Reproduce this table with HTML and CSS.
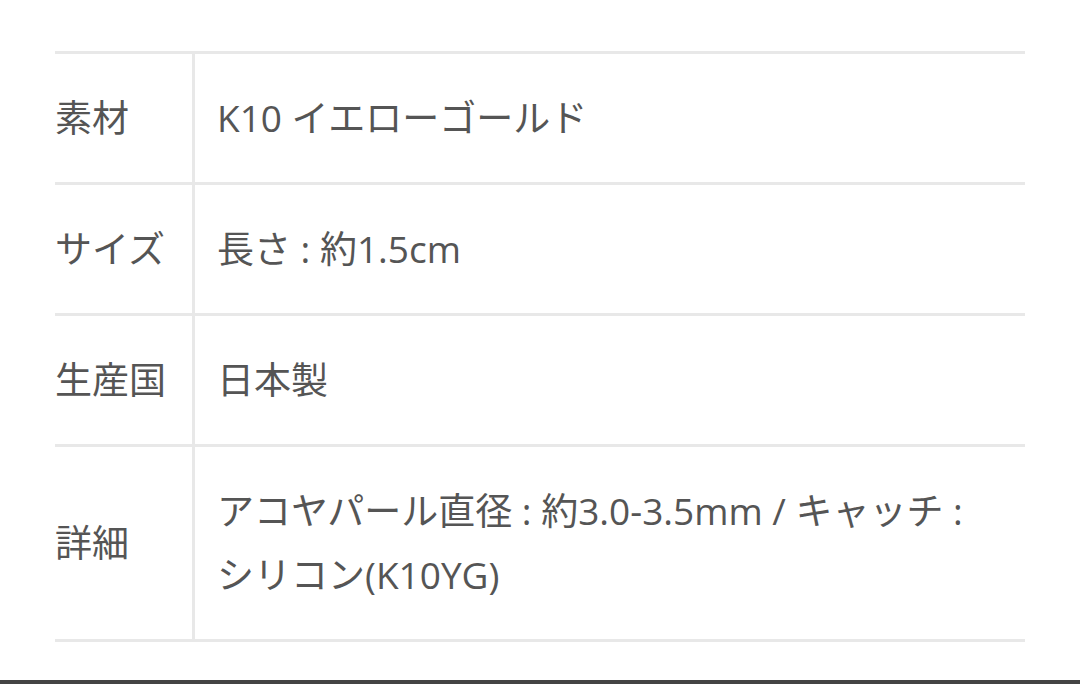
FILE: index.html
```html
<!DOCTYPE html>
<html lang="ja">
<head>
<meta charset="utf-8">
<link rel="stylesheet" href="styles.css">
</head>
<body>
<div class="page">
  <table class="spec">
    <tr>
      <th>素材</th>
      <td>K10 イエローゴールド</td>
    </tr>
    <tr>
      <th>サイズ</th>
      <td>長さ : 約1.5cm</td>
    </tr>
    <tr>
      <th>生産国</th>
      <td>日本製</td>
    </tr>
    <tr>
      <th>詳細</th>
      <td>アコヤパール直径 : 約3.0-3.5mm / キャッチ : シリコン(K10YG)</td>
    </tr>
  </table>
</div>
<div class="edge"></div>
</body>
</html>
```

FILE: styles.css
```css
html, body {
  margin: 0;
  padding: 0;
  background: #fff;
}
body {
  width: 1080px;
  height: 684px;
  overflow: hidden;
  display: flex;
  flex-direction: column;
  font-family: "Open Sans", "Noto Sans CJK JP", sans-serif;
  color: #555;
}
.page {
  flex: 1;
  padding: 51px 55px 0 55px;
}
.spec {
  width: 970px;
  border-collapse: collapse;
  border-top: 3px solid #e8e8e8;
  font-size: 37px;
  line-height: 64px;
}
.spec tr {
  border-bottom: 3px solid #e8e8e8;
}
.spec th {
  width: 137px;
  padding: 32px 0;
  text-align: left;
  font-weight: 400;
  vertical-align: middle;
  border-right: 3px solid #e8e8e8;
  white-space: nowrap;
}
.spec td {
  padding: 32px 18px 32px 22px;
  vertical-align: middle;
}
.edge {
  height: 4px;
  background: #444;
}
```
